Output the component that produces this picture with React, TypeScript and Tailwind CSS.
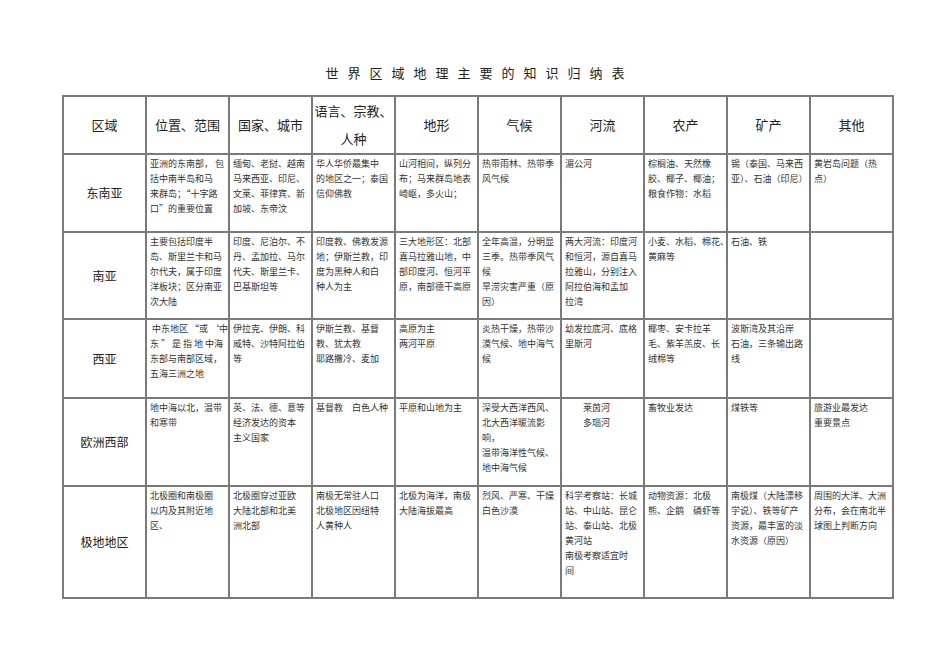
import React from 'react';

const headers = ['区域', '位置、范围', '国家、城市', '语言、宗教、|人种', '地形', '气候', '河流', '农产', '矿产', '其他'];

type Row = { region: string; height: string; cells: string[][] };

const rows: Row[] = [
  {
    region: '东南亚',
    height: 'h-[78px]',
    cells: [
      ['亚洲的东南部， 包', '括中南半岛和马', '来群岛；“十字路', '口”的重要位置'],
      ['缅甸、老挝、越南', '马来西亚、印尼、', '文莱、菲律宾、新', '加坡、东帝汶'],
      ['华人华侨最集中', '的地区之一；泰国', '信仰佛教'],
      ['山河相间，纵列分', '布；马来群岛地表', '崎岖，多火山；'],
      ['热带雨林、热带季', '风气候'],
      ['湄公河'],
      ['棕榈油、天然橡', '胶、椰子、椰油；', '粮食作物：水稻'],
      ['锡（泰国、马来西', '亚）、石油（印尼）'],
      ['黄岩岛问题（热', '点）'],
    ],
  },
  {
    region: '南亚',
    height: 'h-[87px]',
    cells: [
      ['主要包括印度半', '岛、斯里兰卡和马', '尔代夫，属于印度', '洋板块；区分南亚', '次大陆'],
      ['印度、尼泊尔、不', '丹、孟加拉、马尔', '代夫、斯里兰卡、', '巴基斯坦等'],
      ['印度教、佛教发源', '地；伊斯兰教，印', '度为黑种人和白', '种人为主'],
      ['三大地形区：北部', '喜马拉雅山地，中', '部印度河、恒河平', '原，南部德干高原'],
      ['全年高温，分明显', '三季。热带季风气', '候', '旱涝灾害严重（原', '因）'],
      ['两大河流：印度河', '和恒河，源自喜马', '拉雅山，分别注入', '阿拉伯海和孟加', '拉湾'],
      ['小麦、水稻、棉花、', '黄麻等'],
      ['石油、铁'],
      [],
    ],
  },
  {
    region: '西亚',
    height: 'h-[79px]',
    cells: [
      [' 中东地区 “或 ‘中', '东 ” 是 指 地 中海', '东部与南部区域，', '五海三洲之地'],
      ['伊拉克、伊朗、科', '威特、沙特阿拉伯', '等'],
      ['伊斯兰教、基督', '教、犹太教', '耶路撒冷、麦加'],
      ['高原为主', '两河平原'],
      ['炎热干燥，热带沙', '漠气候、地中海气', '候'],
      ['幼发拉底河、底格', '里斯河'],
      ['椰枣、安卡拉羊', '毛、紫羊羔皮、长', '绒棉等'],
      ['波斯湾及其沿岸', '石油，三条输出路', '线'],
      [],
    ],
  },
  {
    region: '欧洲西部',
    height: 'h-[88px]',
    cells: [
      ['地中海以北，温带', '和寒带'],
      ['英、法、德、意等', '经济发达的资本', '主义国家'],
      ['基督教　白色人种'],
      ['平原和山地为主'],
      ['深受大西洋西风、', '北大西洋暖流影', '响，', '温带海洋性气候、', '地中海气候'],
      ['　　莱茵河', '　　多瑙河'],
      ['畜牧业发达'],
      ['煤铁等'],
      ['旅游业最发达', '重要景点'],
    ],
  },
  {
    region: '极地地区',
    height: 'h-[112px]',
    cells: [
      ['北极圈和南极圈', '以内及其附近地', '区、'],
      ['北极圈穿过亚欧', '大陆北部和北美', '洲北部'],
      ['南极无常驻人口', '北极地区因纽特', '人黄种人'],
      ['北极为海洋，南极', '大陆海拔最高'],
      ['烈风、严寒、干燥', '白色沙漠'],
      ['科学考察站：长城', '站、中山站、昆仑', '站、泰山站、北极', '黄河站', '南极考察适宜时', '间'],
      ['动物资源：北极', '熊、企鹅　磷虾等'],
      ['南极煤（大陆漂移', '学说）、铁等矿产', '资源，最丰富的淡', '水资源（原因）'],
      ['周围的大洋、大洲', '分布，会在南北半', '球图上判断方向'],
    ],
  },
];

export default function App() {
  return (
    <div
      className="w-[950px] h-[671px] bg-white text-[#222]"
      style={{ fontFamily: '"Noto Sans CJK SC", "Noto Sans", sans-serif' }}
    >
      <div className="pt-[63px]">
        <h1 className="h-[20px] text-center text-[13px] leading-[20px] font-normal tracking-[9px] pl-[9px]">
          世界区域地理主要的知识归纳表
        </h1>
      </div>
      <table className="mt-[12px] ml-[62px] w-[832px] table-fixed border-collapse border-2 border-[#7a7a7a]">
        <thead>
          <tr className="h-[56px]">
            {headers.map((h) => (
              <th
                key={h}
                className="border-2 border-[#7a7a7a] p-0 text-center align-middle text-[13px] leading-[28px] font-normal"
              >
                {h.split('|').map((line) => (
                  <div key={line}>{line}</div>
                ))}
              </th>
            ))}
          </tr>
        </thead>
        <tbody>
          {rows.map((row) => (
            <tr key={row.region} className={row.height}>
              <td className="border-2 border-[#7a7a7a] p-0 text-center align-middle text-[12px]">
                {row.region}
              </td>
              {row.cells.map((lines, i) => (
                <td
                  key={i}
                  className="border-2 border-[#7a7a7a] pl-[3px] pt-px align-top text-[9px] leading-[15px] text-[#333]"
                >
                  {lines.map((line, j) => (
                    <div key={j} className="whitespace-pre">
                      {line}
                    </div>
                  ))}
                </td>
              ))}
            </tr>
          ))}
        </tbody>
      </table>
    </div>
  );
}
